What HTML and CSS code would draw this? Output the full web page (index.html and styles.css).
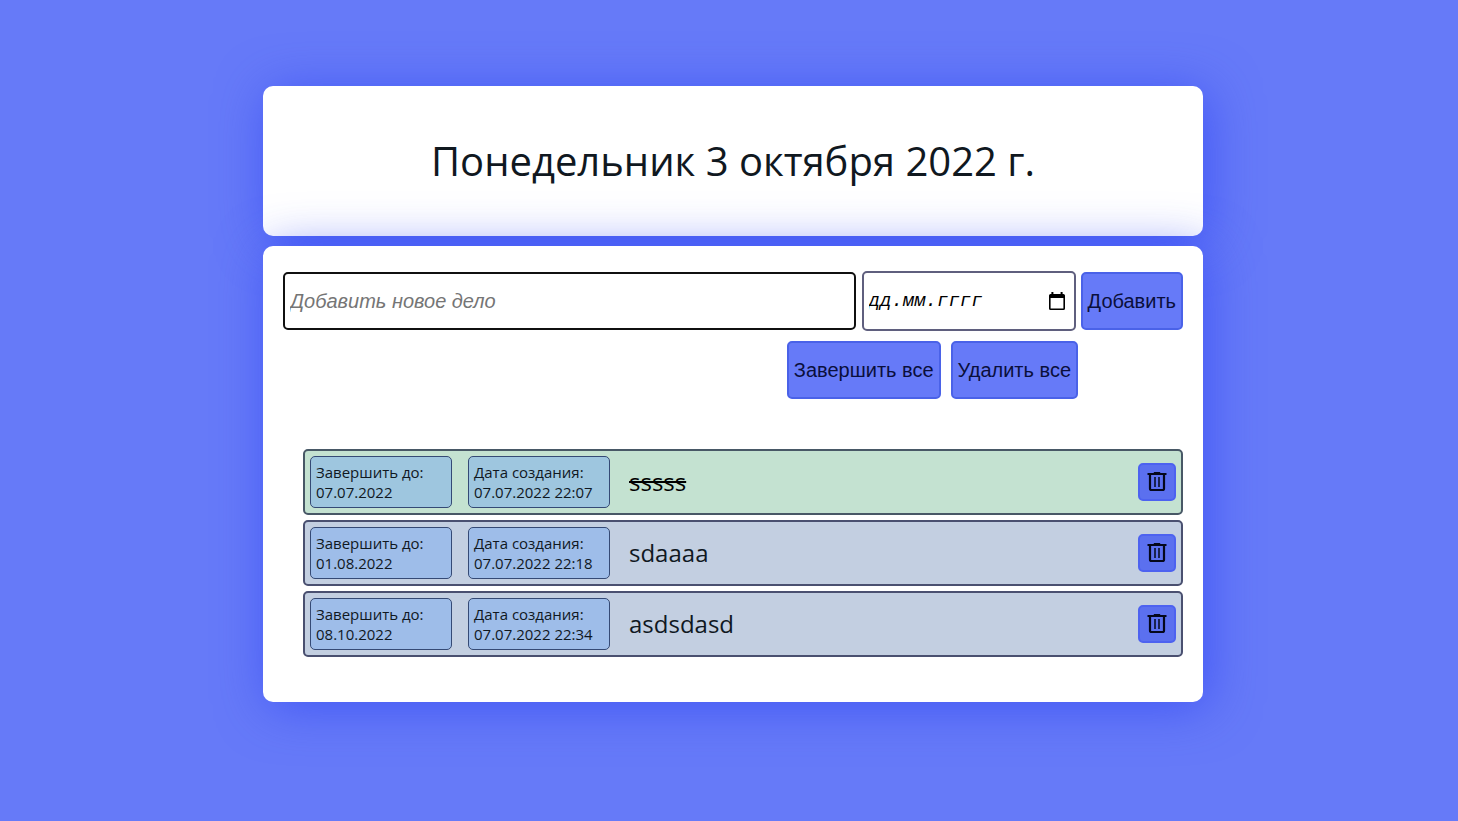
FILE: index.html
```html
<!DOCTYPE html>
<html lang="ru">
<head>
<meta charset="utf-8">
<title>Список дел</title>
<meta name="viewport" content="width=device-width, initial-scale=1">
<link rel="stylesheet" href="styles.css">
</head>
<body>
<svg class="sprite" aria-hidden="true">
  <symbol id="trash" viewBox="0 0 20 20">
    <path d="M0.5 2h19M6.8 0.8h6.4" stroke-width="2"/>
    <path d="M3 2.5V16.4q0 1.6 1.6 1.6h10.8q1.6 0 1.6-1.6V2.5" stroke-width="2.2"/>
    <path d="M8 5v10M12 5v10" stroke-width="1.5"/>
  </symbol>
</svg>
<main class="page">
  <header class="card header">
    <h1 class="title">Понедельник 3 октября 2022 г.</h1>
  </header>
  <section class="card board">
    <form class="form">
      <input class="field task-input" type="text" placeholder="Добавить новое дело" aria-label="Добавить новое дело" autofocus>
      <div class="date">
        <input class="date-input" type="text" placeholder="дд.мм.гггг" aria-label="Завершить до">
        <button class="date-button" type="button" aria-label="Открыть календарь">
          <svg class="calendar" viewBox="0 0 16 18" aria-hidden="true">
            <path fill-rule="evenodd" d="M2.4 0h2v2h7.2V0h2v2H14.4Q16 2 16 3.6V16.4Q16 18 14.4 18H1.6Q0 18 0 16.4V3.6Q0 2 1.6 2h.8zM1.6 6V16.4H14.4V6z"/>
          </svg>
        </button>
      </div>
      <button class="button" type="submit">Добавить</button>
    </form>
    <div class="actions">
      <button class="button" type="button">Завершить все</button>
      <button class="button" type="button">Удалить все</button>
    </div>
    <ul class="list">
      <li class="item item-done">
        <div class="meta">Завершить до:<br>07.07.2022</div>
        <div class="meta">Дата создания:<br>07.07.2022 22:07</div>
        <span class="text">sssss</span>
        <button class="delete" type="button" aria-label="Удалить"><svg class="trash"><use href="#trash"/></svg></button>
      </li>
      <li class="item">
        <div class="meta">Завершить до:<br>01.08.2022</div>
        <div class="meta">Дата создания:<br>07.07.2022 22:18</div>
        <span class="text">sdaaaa</span>
        <button class="delete" type="button" aria-label="Удалить"><svg class="trash"><use href="#trash"/></svg></button>
      </li>
      <li class="item">
        <div class="meta">Завершить до:<br>08.10.2022</div>
        <div class="meta">Дата создания:<br>07.07.2022 22:34</div>
        <span class="text">asdsdasd</span>
        <button class="delete" type="button" aria-label="Удалить"><svg class="trash"><use href="#trash"/></svg></button>
      </li>
    </ul>
  </section>
</main>
</body>
</html>
```
FILE: styles.css
```css
* {
  box-sizing: border-box;
}

body {
  margin: 0;
  padding: 86px 0 0 8px;
  min-height: 100vh;
  background: #667af8;
  color: #10181f;
  font-family: "Open Sans", "Noto Sans", sans-serif;
}

.sprite {
  display: none;
}

.page {
  display: flex;
  flex-direction: column;
  gap: 10px;
  max-width: 940px;
  margin: 0 auto;
}

.card {
  border-radius: 10px;
  background: #fff;
  box-shadow: 5px 5px 50px rgba(46, 68, 242, 0.65);
}

.header {
  padding: 45px 20px;
}

.title {
  margin: 0;
  font-size: 40px;
  font-weight: 400;
  line-height: 60px;
  text-align: center;
}

.board {
  padding: 25px 20px 45px;
}

.form {
  display: flex;
  align-items: center;
  gap: 5px;
}

.field,
.date,
.button {
  height: 58px;
  padding: 0 5px;
  border: 2px solid #4a62e8;
  border-radius: 5px;
  font-family: "Liberation Sans", Arial, sans-serif;
  font-size: 20px;
}

.field {
  flex: 1;
  min-width: 0;
  margin-right: 1px;
  border-color: #101010;
  background: #fff;
  font-style: italic;
  outline: none;
}

.field::placeholder {
  color: #757575;
}

.date {
  display: flex;
  align-items: center;
  width: 214px;
  height: 60px;
  border-color: #5f5f7e;
}

.date-input {
  flex: 1;
  min-width: 0;
  padding: 0;
  border: 0;
  background: none;
  font-family: "Liberation Mono", monospace;
  font-size: 19px;
  font-style: italic;
}

.date-input::placeholder {
  color: #000;
  opacity: 1;
}

.date-button {
  display: flex;
  padding: 0 4px;
  border: 0;
  background: none;
}

.calendar {
  width: 16px;
  height: 18px;
}

.button {
  background: #667af8;
  color: #0a0f3c;
}

.actions {
  display: flex;
  justify-content: flex-end;
  gap: 10px;
  margin: 10px 105px 50px 0;
}

.list {
  display: flex;
  flex-direction: column;
  gap: 5px;
  margin: 0;
  padding: 0 0 0 20px;
  list-style: none;
}

.item {
  display: flex;
  align-items: center;
  gap: 16px;
  padding: 5px;
  border: 2px solid #4a5070;
  border-radius: 5px;
  background: #c3cfe1;
}

.item-done {
  border-color: #485866;
  background: #c4e2d1;
}

.meta {
  width: 142px;
  padding: 5px;
  border: 1px solid #354a75;
  border-radius: 5px;
  background: #9ebde9;
  font-size: 15px;
  line-height: 20px;
}

.item-done .meta {
  background: #9ec6df;
}

.text {
  flex: 1;
  padding-left: 3px;
  font-size: 24px;
  line-height: 32px;
}

.item-done .text {
  color: #000;
  text-decoration: line-through;
}

.delete {
  display: flex;
  align-items: center;
  justify-content: center;
  width: 38px;
  height: 38px;
  padding: 0;
  border: 2px solid #4d62f0;
  border-radius: 5px;
  background: #5b70ef;
}

.trash {
  width: 20px;
  height: 20px;
  fill: none;
  stroke: #05081c;
}
```
